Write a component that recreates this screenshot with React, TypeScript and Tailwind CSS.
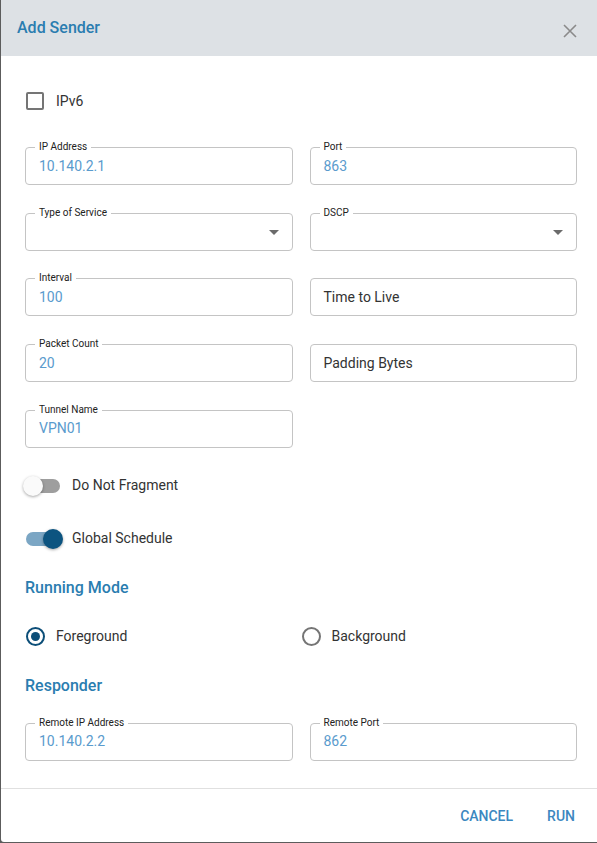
import React from "react";

const FONT = { fontFamily: "Roboto, 'Noto Sans', Arial, sans-serif" };

function Field({ label, value, placeholder, select }: { label?: string; value?: string; placeholder?: string; select?: boolean }) {
  return (
    <div className="relative h-[38px] rounded-[4px] border border-[#c4c4c4] flex items-center pl-[13px] pr-[12px]">
      {label && (
        <span className="absolute left-[9px] top-[-8px] bg-white px-[4px] text-[10px] leading-[14px] text-[#222]">
          {label}
        </span>
      )}
      {value && <span className="text-[14px] text-[#5a9bcd]">{value}</span>}
      {placeholder && <span className="text-[14px] text-[#333]">{placeholder}</span>}
      {select && (
        <svg className="ml-auto mr-[1px] mt-[2px]" width="10" height="5" viewBox="0 0 10 5">
          <path d="M0 0 L10 0 L5 5 Z" fill="#6b6b6b" />
        </svg>
      )}
    </div>
  );
}

function Toggle({ on, label }: { on?: boolean; label: string }) {
  return (
    <div className="flex items-center h-[20px] ml-[-2px]">
      <div className="relative w-[40px] h-[20px]">
        <div className={`absolute left-[3px] top-[3px] w-[34px] h-[14px] rounded-full ${on ? "bg-[#7ba6c4]" : "bg-[#9e9e9e]"}`} />
        <div
          className={`absolute top-0 w-[20px] h-[20px] rounded-full ${on ? "left-[20px] bg-[#0c5480]" : "left-0 bg-[#fafafa]"} shadow-[0_1px_3px_rgba(0,0,0,0.35)]`}
        />
      </div>
      <span className="ml-[9px] text-[14px] text-[#333]">{label}</span>
    </div>
  );
}

function Radio({ checked, label }: { checked?: boolean; label: string }) {
  return (
    <div className="flex items-center">
      <div
        className={`w-[19px] h-[19px] rounded-full border-2 flex items-center justify-center ${checked ? "border-[#0c4e78]" : "border-[#757575]"}`}
      >
        {checked && <div className="w-[9px] h-[9px] rounded-full bg-[#0c4e78]" />}
      </div>
      <span className="ml-[11px] text-[14px] text-[#333]">{label}</span>
    </div>
  );
}

export default function App() {
  return (
    <div className="w-[597px] h-[843px] bg-[#5c5c5c] pl-px pb-px" style={FONT}>
      <div className="w-full h-full bg-white rounded-bl-[3px] flex flex-col overflow-hidden">
        <div className="h-[56px] bg-[#dde1e5] flex items-center pl-[16px] pr-[20px] shrink-0">
          <span className="text-[16px] font-medium text-[#2a7db0]">Add Sender</span>
          <svg className="ml-auto mt-[6px]" width="14" height="14" viewBox="0 0 14 14">
            <path d="M1 1 L13 13 M13 1 L1 13" stroke="#8a8a8a" strokeWidth="1.6" />
          </svg>
        </div>

        <div className="flex flex-col pl-[24px] pr-[20px]">
          <div className="flex items-center h-[18px] mt-[36px]">
            <div className="w-[18px] h-[18px] rounded-[2px] border-2 border-[#757575] ml-[1px]" />
            <span className="ml-[12px] text-[14px] text-[#333]">IPv6</span>
          </div>

          <div className="grid grid-cols-2 gap-x-[17px] gap-y-[27.7px] mt-[37px]">
            <Field label="IP Address" value="10.140.2.1" />
            <Field label="Port" value="863" />
            <Field label="Type of Service" select />
            <Field label="DSCP" select />
            <Field label="Interval" value="100" />
            <Field placeholder="Time to Live" />
            <Field label="Packet Count" value="20" />
            <Field placeholder="Padding Bytes" />
            <Field label="Tunnel Name" value="VPN01" />
          </div>

          <div className="mt-[28px]">
            <Toggle label="Do Not Fragment" />
          </div>
          <div className="mt-[33px]">
            <Toggle on label="Global Schedule" />
          </div>

          <div className="mt-[29px] h-[20px] flex items-center text-[16px] font-medium text-[#2a7db0]">Running Mode</div>

          <div className="grid grid-cols-2 gap-x-[17px] mt-[28px] h-[20px] items-center">
            <div className="pl-[1px]"><Radio checked label="Foreground" /></div>
            <div className="ml-[-8px]"><Radio label="Background" /></div>
          </div>

          <div className="mt-[30px] h-[20px] flex items-center text-[16px] font-medium text-[#2a7db0]">Responder</div>

          <div className="grid grid-cols-2 gap-x-[17px] mt-[27px]">
            <Field label="Remote IP Address" value="10.140.2.2" />
            <Field label="Remote Port" value="862" />
          </div>
        </div>

        <div className="mt-auto border-t border-[#e0e0e0] h-[54px] flex items-center justify-end pr-[22px] gap-[34px] pt-[2px]">
          <span className="text-[14px] font-medium text-[#3b87bf]">CANCEL</span>
          <span className="text-[14px] font-medium text-[#3b87bf]">RUN</span>
        </div>
      </div>
    </div>
  );
}
